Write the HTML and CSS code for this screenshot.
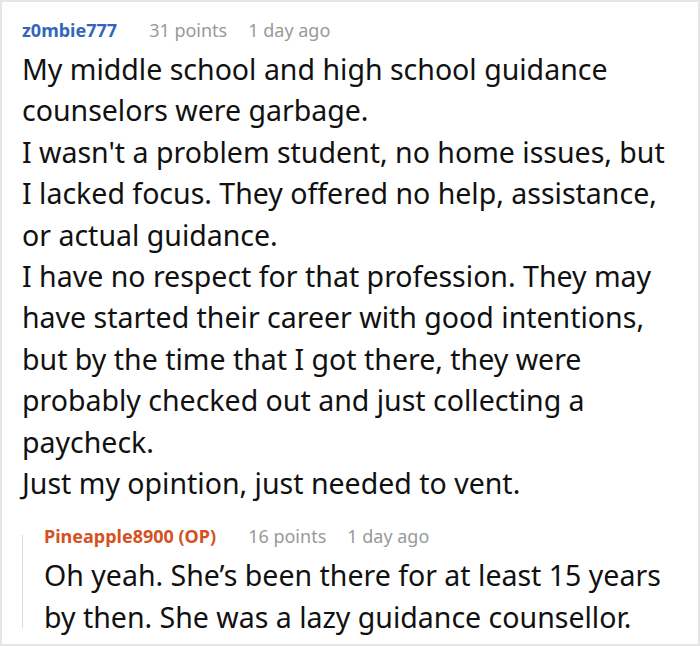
FILE: index.html
```html
<!DOCTYPE html>
<html>
<head>
<meta charset="utf-8">
<link rel="stylesheet" href="styles.css">
</head>
<body>
<div class="thread">
  <div class="comment">
    <div class="meta">
      <span class="author">z0mbie777</span>
      <span class="info">31 points</span>
      <span class="info">1 day ago</span>
    </div>
    <div class="text">
      <p>My middle school and high school guidance counselors were garbage.</p>
      <p>I wasn't a problem student, no home issues, but I lacked focus. They offered no help, assistance, or actual guidance.</p>
      <p>I have no respect for that profession. They may have started their career with good intentions, but by the time that I got there, they were probably checked out and just collecting a paycheck.</p>
      <p>Just my opintion, just needed to vent.</p>
    </div>
    <div class="reply">
      <div class="meta">
        <span class="author op">Pineapple8900 (OP)</span>
        <span class="info">16 points</span>
        <span class="info">1 day ago</span>
      </div>
      <div class="text">
        <p>Oh yeah. She’s been there for at least 15 years by then. She was a lazy guidance counsellor.</p>
      </div>
    </div>
  </div>
</div>
</body>
</html>
```
FILE: styles.css
```css
html, body {
  margin: 0;
  padding: 0;
  background: #fff;
}
.thread {
  width: 700px;
  height: 646px;
  box-sizing: border-box;
  border: 2px solid #e6e6e6;
  padding: 14px 20px 0 20px;
  font-family: "Noto Sans", sans-serif;
  color: #111;
  overflow: hidden;
}
.meta {
  display: flex;
  gap: 21px;
  font-size: 18px;
  line-height: 28px;
  margin-bottom: 5px;
}
.author {
  font-weight: bold;
  color: #3366bb;
  margin-right: 11px;
}
.author.op {
  color: #d4521f;
}
.info {
  color: #999;
}
.text {
  font-size: 28.5px;
  line-height: 41.4px;
}
.text p {
  margin: 0;
}
.reply {
  position: relative;
  margin-top: 18px;
  padding-left: 22px;
}
.reply::before {
  content: "";
  position: absolute;
  left: 0;
  top: 13px;
  bottom: 10px;
  border-left: 1px solid #ddd;
}
```
